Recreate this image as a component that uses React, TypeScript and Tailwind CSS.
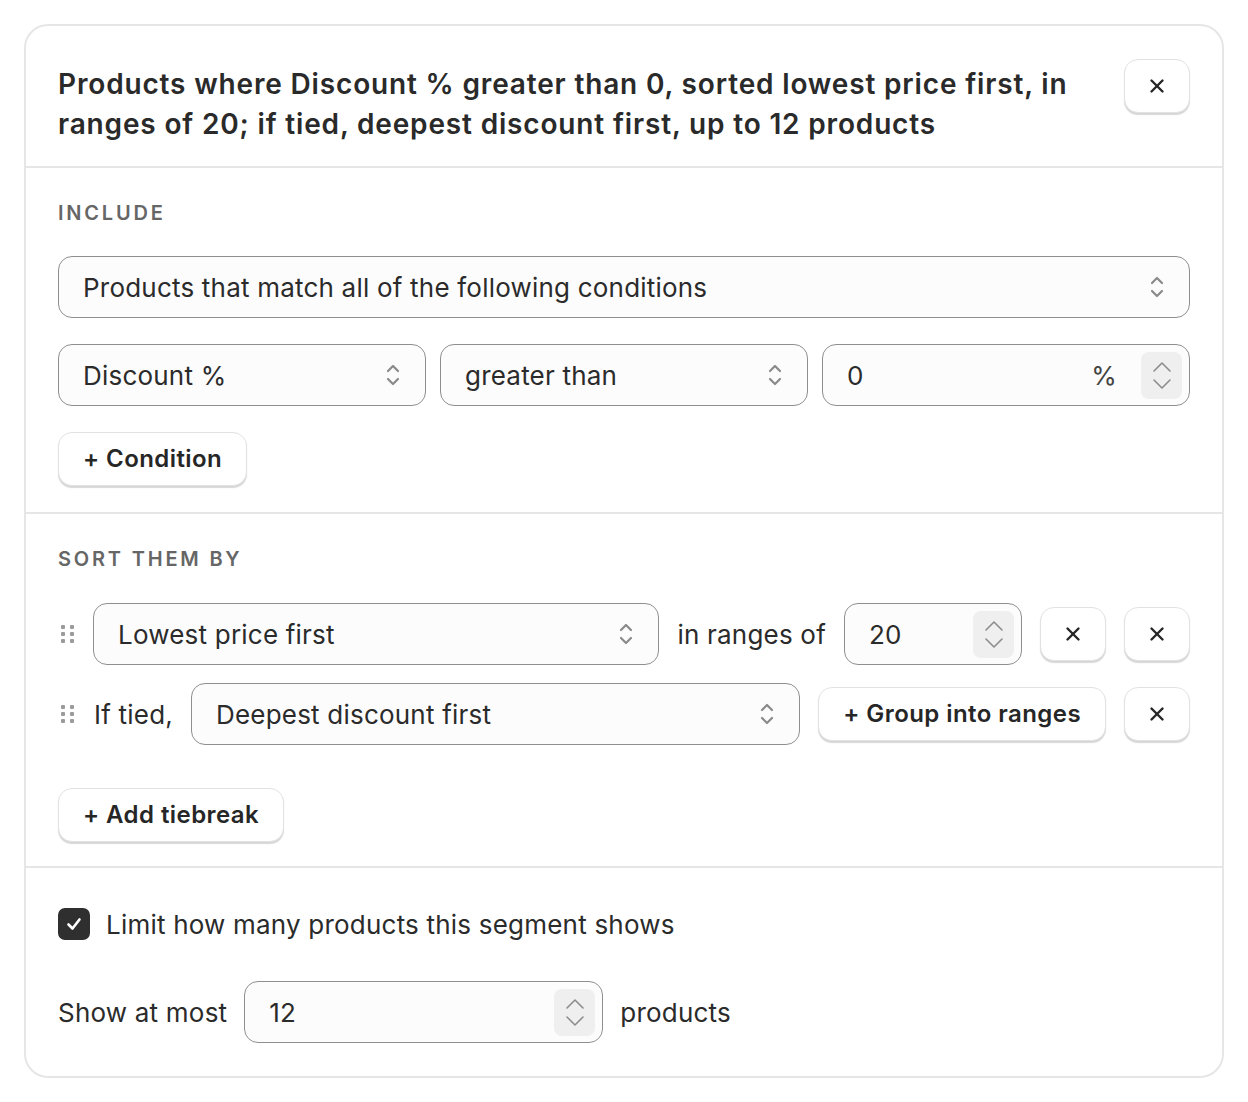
import React from 'react';

const font = { fontFamily: 'Inter, "Noto Sans", sans-serif' };

function UpDown() {
  return (
    <svg width="16" height="28" viewBox="0 0 16 28" fill="none" stroke="#8a8a8a" strokeWidth="2.2" strokeLinecap="round" strokeLinejoin="round">
      <path d="M3 10 L8 5 L13 10" />
      <path d="M3 18 L8 23 L13 18" />
    </svg>
  );
}

function Stepper() {
  return (
    <div className="w-[41px] h-[47px] rounded-lg bg-[#efefef] flex flex-col items-center justify-center gap-[5px]">
      <svg width="22" height="12" viewBox="0 0 22 12" fill="none" stroke="#8c8c8c" strokeWidth="1.6" strokeLinecap="round" strokeLinejoin="round">
        <path d="M3 10 L11 2 L19 10" />
      </svg>
      <svg width="22" height="12" viewBox="0 0 22 12" fill="none" stroke="#8c8c8c" strokeWidth="1.6" strokeLinecap="round" strokeLinejoin="round">
        <path d="M3 2 L11 10 L19 2" />
      </svg>
    </div>
  );
}

function XIcon() {
  return (
    <svg width="18" height="18" viewBox="0 0 18 18" fill="none" stroke="#262626" strokeWidth="2.4" strokeLinecap="round">
      <path d="M3.5 3.5 L14.5 14.5" />
      <path d="M14.5 3.5 L3.5 14.5" />
    </svg>
  );
}

function Handle() {
  return (
    <div className="w-[18px] flex justify-center">
      <div className="grid grid-cols-2 gap-x-[5px] gap-y-[3px]">
        {[0, 1, 2, 3, 4, 5].map(i => (
          <span key={i} className="w-[4px] h-[4px] rounded-[1px] bg-[#9b9b9b]" />
        ))}
      </div>
    </div>
  );
}

function Select({ label, className = '' }: { label: string; className?: string }) {
  return (
    <div className={`h-[62px] rounded-[14px] border-[1.5px] border-[#8f8f8f] bg-[#fcfcfc] pl-6 pr-6 flex items-center justify-between text-[26px] text-[#2b2b2b] ${className}`}>
      <span className="truncate">{label}</span>
      <UpDown />
    </div>
  );
}

function NumberField({ value, unit, className = '' }: { value: string; unit?: string; className?: string }) {
  return (
    <div className={`h-[62px] rounded-[14px] border-[1.5px] border-[#8f8f8f] bg-[#fcfcfc] pl-6 pr-[7px] flex items-center text-[26px] text-[#2b2b2b] ${className}`}>
      <span className="flex-1">{value}</span>
      {unit && <span className="mr-[24px] text-[#444]">{unit}</span>}
      <Stepper />
    </div>
  );
}

function Button({ children, className = '' }: { children: React.ReactNode; className?: string }) {
  return (
    <button className={`h-[54px] rounded-[14px] border-[1.5px] border-[#e2e2e2] bg-white shadow-[0_2px_1px_rgba(0,0,0,0.16)] flex items-center justify-center text-[24px] font-semibold tracking-[0.018em] text-[#262626] ${className}`}>
      {children}
    </button>
  );
}

function SectionLabel({ children }: { children: React.ReactNode }) {
  return <div className="text-[20px] leading-[26px] font-semibold tracking-[0.14em] text-[#666]">{children}</div>;
}

export default function App() {
  return (
    <div className="min-h-screen bg-white p-6 tracking-[0.013em]" style={font}>
      <div className="rounded-[24px] border-2 border-[#e6e6e6] bg-white overflow-hidden">
        {/* header */}
        <div className="flex items-start justify-between gap-8 px-8 pt-[38px] pb-[22px] border-b-2 border-[#e6e6e6]">
          <h1 className="text-[28px] leading-[40px] font-semibold text-[#2a2a2a] tracking-[0.03em] max-w-[1040px]">
            Products where Discount % greater than 0, sorted lowest price first, in ranges of 20; if tied, deepest discount first, up to 12 products
          </h1>
          <Button className="w-[66px] shrink-0 mt-[-5px]"><XIcon /></Button>
        </div>

        {/* include */}
        <div className="px-8 pt-8 pb-[26px] border-b-2 border-[#e6e6e6] flex flex-col">
          <SectionLabel>INCLUDE</SectionLabel>
          <Select label="Products that match all of the following conditions" className="mt-[30px]" />
          <div className="grid grid-cols-3 gap-[14px] mt-[26px]">
            <Select label="Discount %" />
            <Select label="greater than" />
            <NumberField value="0" unit="%" />
          </div>
          <div className="mt-[26px]">
            <Button className="px-6">+ Condition</Button>
          </div>
        </div>

        {/* sort */}
        <div className="px-8 pt-8 pb-[24px] border-b-2 border-[#e6e6e6] flex flex-col">
          <SectionLabel>SORT THEM BY</SectionLabel>
          <div className="mt-[31px] flex items-center gap-[18px] text-[26px] text-[#2b2b2b]">
            <Handle />
            <Select label="Lowest price first" className="flex-1 -ml-[1px]" />
            <span className="whitespace-nowrap">in ranges of</span>
            <NumberField value="20" className="w-[178px]" />
            <Button className="w-[66px]"><XIcon /></Button>
            <Button className="w-[66px]"><XIcon /></Button>
          </div>
          <div className="mt-[18px] flex items-center gap-[18px] text-[26px] text-[#2b2b2b]">
            <Handle />
            <span className="whitespace-nowrap">If tied,</span>
            <Select label="Deepest discount first" className="flex-1" />
            <Button className="px-6">+ Group into ranges</Button>
            <Button className="w-[66px]"><XIcon /></Button>
          </div>
          <div className="mt-[43px]">
            <Button className="px-6">+ Add tiebreak</Button>
          </div>
        </div>

        {/* limit */}
        <div className="px-8 pt-[39px] pb-[33px] flex flex-col text-[26px] text-[#2b2b2b]">
          <label className="flex items-center gap-4 h-[34px]">
            <span className="w-[32px] h-[32px] rounded-[7px] bg-[#2f2f2f] flex items-center justify-center">
              <svg width="18" height="18" viewBox="0 0 18 18" fill="none" stroke="white" strokeWidth="2.6" strokeLinecap="round" strokeLinejoin="round">
                <path d="M3.5 9.5 L7.5 13.5 L14.5 4.5" />
              </svg>
            </span>
            <span>Limit how many products this segment shows</span>
          </label>
          <div className="mt-[40px] flex items-center gap-[17px]">
            <span>Show at most</span>
            <NumberField value="12" className="w-[359px]" />
            <span>products</span>
          </div>
        </div>
      </div>
    </div>
  );
}
